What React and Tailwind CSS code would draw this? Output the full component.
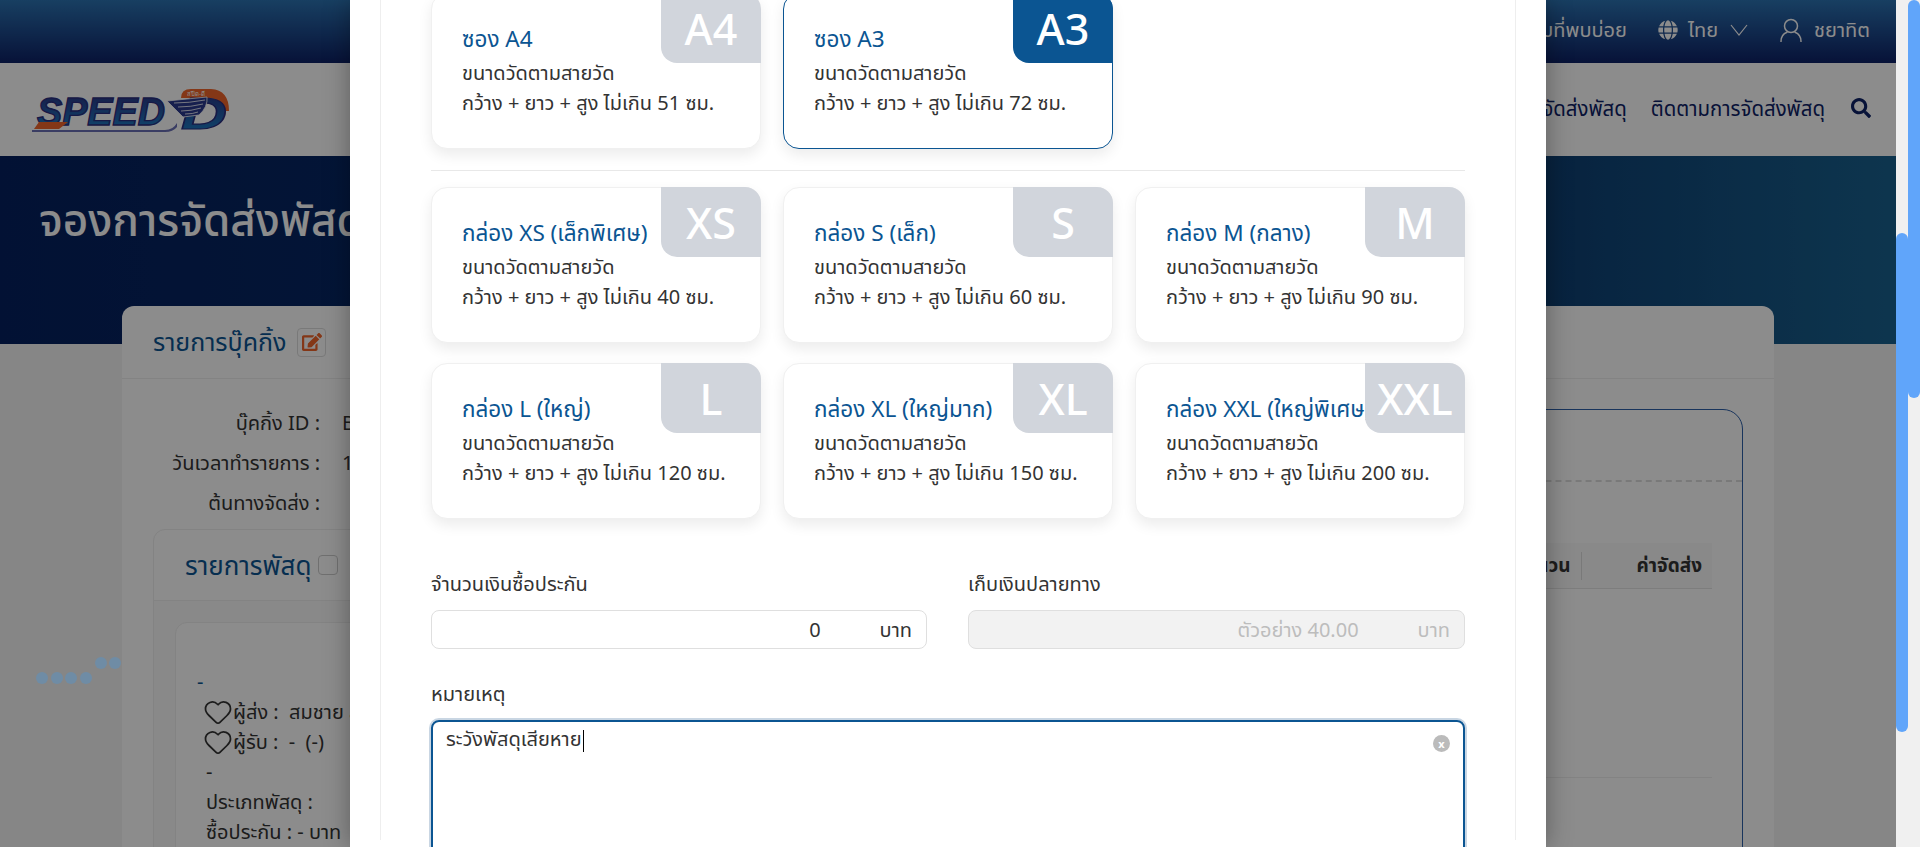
import React from "react";
import { Heart } from "lucide-react";
import { FaGlobe, FaSearch, FaEdit } from "react-icons/fa";

const FONT = "[font-family:'Noto_Sans','Noto_Sans_Thai','Open_Sans',sans-serif]";

function Logo() {
  return (
    <svg width="200" height="46" viewBox="0 0 200 46" aria-label="SPEED-D logo" className="overflow-visible">
      <defs>
        <linearGradient id="lg" x1="0" y1="0" x2="0" y2="1">
          <stop offset="0" stopColor="#2b2f80" />
          <stop offset="1" stopColor="#1a85cc" />
        </linearGradient>
      </defs>
      <path d="M1 43 L134 43 Q142 43 146 36 L146 40 Q142 45 134 45 L1 45 Z" fill="#6a6fb5" />
      <path d="M150 11 Q150 2 160 2 L180 2 Q198 3 198 24 L190 24 Q190 11 176 11 Z" fill="#f0652a" />
      <text x="6" y="38" fontFamily="'Liberation Sans',sans-serif" fontWeight="700" fontStyle="italic" fontSize="38" textLength="128" lengthAdjust="spacingAndGlyphs" fill="url(#lg)" stroke="#2b2f80" strokeWidth="1.4">SPEED</text>
      <path d="M3 42 L8 35 L37 35 L28 42 Z" fill="#f0652a" />
      <text x="150" y="42" fontFamily="'Liberation Sans',sans-serif" fontWeight="700" fontStyle="italic" fontSize="44" textLength="46" lengthAdjust="spacingAndGlyphs" fill="url(#lg)" stroke="#2b2f80" strokeWidth="1.2">D</text>
      <path d="M136 14 L176 10 Q177 20 168 28 L152 30 Q144 22 136 14 Z" fill="#2b3a8f" stroke="#fff" strokeWidth="0.8" />
      <path d="M143 16 Q158 16 174 13 M147 20 Q160 20 172 17 M150 24 Q160 24 170 21 M154 27 Q162 27 167 25" stroke="#fff" strokeWidth="0.8" fill="none" />
      <text x="156" y="8.5" fontSize="6" fontFamily="'Noto Sans',sans-serif" fill="#fff">สปีด-ดี</text>
    </svg>
  );
}

function UserIcon() {
  return (
    <svg width="22" height="24" viewBox="0 0 22 24" fill="none" stroke="currentColor" strokeWidth="1.5" className="ml-[32px]">
      <circle cx="11" cy="8" r="6.5" />
      <path d="M1 23.5c0-5 2.5-8 6-9.3M21 23.5c0-5-2.5-8-6-9.3" strokeLinecap="round" />
    </svg>
  );
}

function Chevron() {
  return (
    <svg width="18" height="12" viewBox="0 0 18 12" fill="none" stroke="currentColor" strokeWidth="1.2" className="ml-[12px]">
      <path d="M1 1l8 10 8-10" />
    </svg>
  );
}

function Row({ label, value }) {
  return (
    <div className="flex h-10 items-center text-[20px] text-[#333]">
      <div className="w-[167px] text-right whitespace-nowrap">{label}</div>
      <div className="ml-[22px]">{value}</div>
    </div>
  );
}

function BackgroundPage() {
  return (
    <div className="h-full w-[1896px] shrink-0 bg-[#f5f5f5]">
      <div className="flex h-[63px] items-center justify-end bg-[linear-gradient(180deg,#2c73b2,#0d2166)] pr-[26px] pb-[3px] text-[20px] text-white">
        <span>คำถามที่พบบ่อย</span>
        <FaGlobe className="ml-[31px] text-[20px]" />
        <span className="ml-[10px]">ไทย</span>
        <Chevron />
        <UserIcon />
        <span className="ml-[12px]">ชยาทิต</span>
      </div>
      <div className="flex h-[93px] items-center justify-between bg-white pr-[25px] pl-[31px] text-[20.4px] text-[#0d2166]">
        <Logo />
        <div className="flex items-center pb-[3px]">
          <span>การจัดส่งพัสดุ</span>
          <span className="ml-[24px]">ติดตามการจัดส่งพัสดุ</span>
          <FaSearch className="ml-[26px] text-[20px]" />
        </div>
      </div>
      <div className="h-[188px] bg-[linear-gradient(90deg,#05205f_0%,#0e3f73_81.5%,#19628f_100%)] pt-[30px] pl-[39px]">
        <h1 className="text-[44px] leading-[66px] font-medium text-white">จองการจัดส่งพัสดุ</h1>
      </div>
      <div className="mx-[122px] -mt-[38px] h-[600px] rounded-t-xl bg-white">
        <div className="flex h-[73px] items-center border-b border-[#eee] pl-[31px]">
          <span className="text-[25px] text-[#0b5592]">รายการบุ๊คกิ้ง</span>
          <span className="ml-[11px] flex h-[29px] w-[29px] items-center justify-center rounded border border-[#ddd] text-[20px] text-[#f0652a]"><FaEdit /></span>
        </div>
        <div className="flex justify-between pr-[31px]">
          <div className="w-[800px] pt-[24px] pl-[31px]">
            <Row label="บุ๊คกิ้ง ID :" value="B" />
            <Row label="วันเวลาทำรายการ :" value="1" />
            <Row label="ต้นทางจัดส่ง :" value="" />
            <div className="mt-[6px] rounded-t-xl border border-[#eee]">
              <div className="flex h-[71px] items-center border-b border-[#eee] pl-[31px]">
                <span className="text-[26px] text-[#0b5592]">รายการพัสดุ</span>
                <span className="ml-[6px] h-[20px] w-[20px] rounded border border-[#ccc] bg-white" />
              </div>
              <div className="bg-[#fafafa] px-[21px] pt-[21px]">
                <div className="rounded-t-xl border border-[#eee] bg-white px-[21px] pt-[44px] text-[20px] leading-[30px] text-[#333]">
                  <div className="text-[#0b5592]">-</div>
                  <div className="ml-[9px]">
                    <div className="-ml-[3px] flex items-center"><Heart className="h-[30px] w-[30px]" strokeWidth={1.4} />ผู้ส่ง :&nbsp; สมชาย สมใจ</div>
                    <div className="-ml-[3px] flex items-center"><Heart className="h-[30px] w-[30px]" strokeWidth={1.4} />ผู้รับ :&nbsp; -&nbsp; (-)</div>
                    <div>-</div>
                    <div>ประเภทพัสดุ :</div>
                    <div>ซื้อประกัน : - บาท</div>
                  </div>
                </div>
              </div>
            </div>
          </div>
          <div className="mt-[30px] h-[600px] w-[740px] rounded-t-[20px] border border-[#2d5fa8] bg-white">
            <div className="h-[72px] border-b-2 border-dashed border-[#ddd]" />
            <div className="mt-[61px] mr-[30px] flex h-[46px] items-center justify-end border-b border-[#e4e4e4] bg-[#fafafa] pr-[10px] text-[19px] font-bold text-[#333]">
              <span>จำนวน</span>
              <span className="mr-[55px] ml-[10px] h-[28px] w-px bg-[#ddd]" />
              <span>ค่าจัดส่ง</span>
            </div>
            <div className="mt-[188px] mr-[30px] border-b border-[#eee]" />
          </div>
        </div>
      </div>
    </div>
  );
}

function SizeCard({ title, size, mm, selected }) {
  return (
    <div className={`relative h-[156px] w-[330px] rounded-2xl border bg-white pt-[30px] pl-[30px] shadow-[0_6px_14px_rgba(0,0,0,0.08)] ${selected ? "border-[#0b5592]" : "border-[#f0f0f0]"}`}>
      <div className="text-[22.5px] leading-[30px] font-normal whitespace-nowrap text-[#0b5592]">{title}</div>
      <div className="mt-[4px] text-[20px] leading-[30px] text-[#333]">ขนาดวัดตามสายวัด</div>
      <div className="text-[20px] leading-[30px] whitespace-nowrap text-[#333]">กว้าง + ยาว + สูง ไม่เกิน {mm} ซม.</div>
      <div className={`absolute -top-px -right-px flex h-[70px] w-[100px] items-center justify-center rounded-tr-2xl rounded-bl-2xl text-[43px] leading-none font-medium text-white ${selected ? "bg-[#0b5592]" : "bg-[#d1d5dc]"}`}>{size}</div>
    </div>
  );
}

function Field({ value, disabled }) {
  return (
    <div className={`flex h-[39px] items-center justify-end rounded-lg border border-[#dfdfdf] pr-[14px] text-[20px] ${disabled ? "bg-[#f2f2f2] text-[#bdbdbd]" : "bg-white text-[#333]"}`}>
      <span>{value}</span>
      <span className="ml-[59px]">บาท</span>
    </div>
  );
}

function Modal() {
  return (
    <div className="h-full w-[1196px] overflow-hidden bg-white px-[30px] shadow-[0_0_24px_rgba(0,0,0,0.35)]">
      <div className="h-full border-x border-[#eee] px-[50px] pt-0">
        <div className="-mt-[7px] flex gap-[22px]">
          <SizeCard title="ซอง A4" size="A4" mm="51" />
          <SizeCard title="ซอง A3" size="A3" mm="72" selected />
        </div>
        <div className="mt-[21px] border-t border-[#e8e8e8]" />
        <div className="mt-[16px] grid grid-cols-[330px_330px_330px] gap-x-[22px] gap-y-[20px]">
          <SizeCard title="กล่อง XS (เล็กพิเศษ)" size="XS" mm="40" />
          <SizeCard title="กล่อง S (เล็ก)" size="S" mm="60" />
          <SizeCard title="กล่อง M (กลาง)" size="M" mm="90" />
          <SizeCard title="กล่อง L (ใหญ่)" size="L" mm="120" />
          <SizeCard title="กล่อง XL (ใหญ่มาก)" size="XL" mm="150" />
          <SizeCard title="กล่อง XXL (ใหญ่พิเศษ)" size="XXL" mm="200" />
        </div>
        <div className="mt-[53px] grid grid-cols-[496px_497px] gap-x-[41px] text-[#333]">
          <div>
            <div className="mb-[14px] text-[20px] leading-[24px]">จำนวนเงินซื้อประกัน</div>
            <Field value="0" />
          </div>
          <div>
            <div className="mb-[14px] text-[20px] leading-[24px]">เก็บเงินปลายทาง</div>
            <Field value="ตัวอย่าง 40.00" disabled />
          </div>
        </div>
        <div className="mt-[33px] mb-[14px] text-[20px] leading-[24px] text-[#333]">หมายเหตุ</div>
        <div className="relative h-[200px] rounded-lg border-2 border-[#0b5592] px-[13px] py-[3px] text-[20px] leading-[28px] text-[#333] shadow-[0_0_0_2px_#c9d6e3]">
          <span>ระวังพัสดุเสียหาย</span>
          <span className="ml-px inline-block h-[22px] w-px bg-black align-middle" />
          <span className="absolute top-[13px] right-[13px] flex h-[17px] w-[17px] items-center justify-center rounded-full bg-[#bbb] text-[11px] leading-none font-bold text-white">x</span>
        </div>
      </div>
    </div>
  );
}

function Dots() {
  return (
    <div className="absolute top-[657px] left-[36px] z-20 flex items-start gap-[2.7px]">
      {[0, 1, 2, 3].map((i) => (
        <span key={i} className="mt-[15px] h-[12px] w-[12px] shrink-0 rounded-full bg-[#6f8ca5]" />
      ))}
      <span className="h-[12px] w-[12px] shrink-0 rounded-full bg-[#6f8ca5]" />
      <span className="h-[12px] w-[12px] shrink-0 rounded-full bg-[#6f8ca5]" />
    </div>
  );
}

function Scrollbars() {
  return (
    <div className="flex h-full w-[24px] shrink-0 bg-[#f0f0f0]">
      <div className="h-full w-[12px] pt-[233px]">
        <div className="h-[499px] rounded-full bg-[#60a5fa]" />
      </div>
      <div className="h-full w-[12px]">
        <div className="h-[398px] rounded-full bg-[#60a5fa]" />
      </div>
    </div>
  );
}

export default function App() {
  return (
    <div className={`relative flex h-[847px] w-full overflow-hidden ${FONT}`}>
      <BackgroundPage />
      <Scrollbars />
      <div className="absolute top-0 bottom-0 left-0 z-10 flex w-[1896px] justify-center bg-black/45">
        <Modal />
      </div>
      <Dots />
    </div>
  );
}
